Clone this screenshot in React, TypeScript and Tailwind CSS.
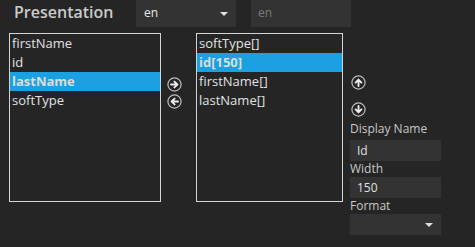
const font = { fontFamily: '"Open Sans", "Noto Sans", sans-serif' };

function CircleArrow({ dir }: { dir: "left" | "right" | "up" | "down" }) {
  const rot = { right: 0, down: 90, left: 180, up: 270 }[dir];
  return (
    <svg width="15" height="15" viewBox="0 0 15 15" className="block">
      <circle cx="7.5" cy="7.5" r="6.6" fill="none" stroke="#bdbdbd" strokeWidth="1.2" />
      <g transform={`rotate(${rot} 7.5 7.5)`}>
        <path d="M4 7.5 H10.2 M7.4 4.6 L10.4 7.5 L7.4 10.4" fill="none" stroke="#ededed" strokeWidth="1.9" strokeLinecap="round" strokeLinejoin="round" />
      </g>
    </svg>
  );
}

function Caret() {
  return <div className="w-0 h-0 border-l-[4px] border-r-[4px] border-t-[4px] border-l-transparent border-r-transparent border-t-[#e0e0e0]" />;
}

function ListBox({ items, selected, width }: { items: string[]; selected: number; width: string }) {
  return (
    <div className={`${width} h-[169px] border border-[#d4d4d4] flex flex-col`}>
      {items.map((it, i) => (
        <div
          key={it}
          className={`h-[19px] pl-[2px] flex items-center text-[13px] ${
            i === selected ? "bg-[#1ba1e2] font-bold text-[#dcdcdc]" : "text-[#e2e2e2]"
          }`}
        >
          {it}
        </div>
      ))}
    </div>
  );
}

export default function App() {
  return (
    <div className="w-[475px] h-[247px] bg-[#252525] overflow-hidden" style={font}>
      {/* Header */}
      <div className="flex h-[27px]">
        <div className="w-[136px] pl-[14px] flex items-center text-[16px] font-semibold text-[#cbcbcb] -mt-[3px]">
          Presentation
        </div>
        <div className="w-[100px] bg-[#333333] flex items-center justify-between pl-[8px] pr-[8px] text-[12px] text-[#e8e8e8]">
          <span className="-mt-[2px]">en</span>
          <Caret />
        </div>
        <div className="ml-[15px] w-[100px] bg-[#333333] flex items-center pl-[7px] text-[12px] text-[#7a7a7a]">
          <span className="-mt-[2px]">en</span>
        </div>
      </div>

      {/* Body */}
      <div className="flex mt-[6px] ml-[9px]">
        <ListBox items={["firstName", "id", "lastName", "softType"]} selected={2} width="w-[152px]" />
        <div className="w-[35px] flex flex-col pt-[44px] gap-[2px] pl-[6px]">
          <CircleArrow dir="right" />
          <CircleArrow dir="left" />
        </div>
        <ListBox items={["softType[]", "id[150]", "firstName[]", "lastName[]"]} selected={1} width="w-[147px]" />
        <div className="pl-[7px] flex flex-col text-[12px] text-[#c8c8c8]">
          <div className="pt-[42px] pl-[1px] flex flex-col gap-[12px]">
            <CircleArrow dir="up" />
            <CircleArrow dir="down" />
          </div>
          <div className="mt-[4px] h-[16px] flex items-center">Display Name</div>
          <div className="mt-[3px] w-[91px] h-[21px] bg-[#333333] flex items-center pl-[7px] text-[#e0e0e0]">Id</div>
          <div className="h-[16px] flex items-center">Width</div>
          <div className="w-[91px] h-[21px] bg-[#333333] flex items-center pl-[7px] text-[#e0e0e0]">150</div>
          <div className="h-[16px] flex items-center">Format</div>
          <div className="w-[91px] h-[21px] bg-[#333333] flex items-center justify-end pr-[8px]">
            <Caret />
          </div>
        </div>
      </div>
    </div>
  );
}
